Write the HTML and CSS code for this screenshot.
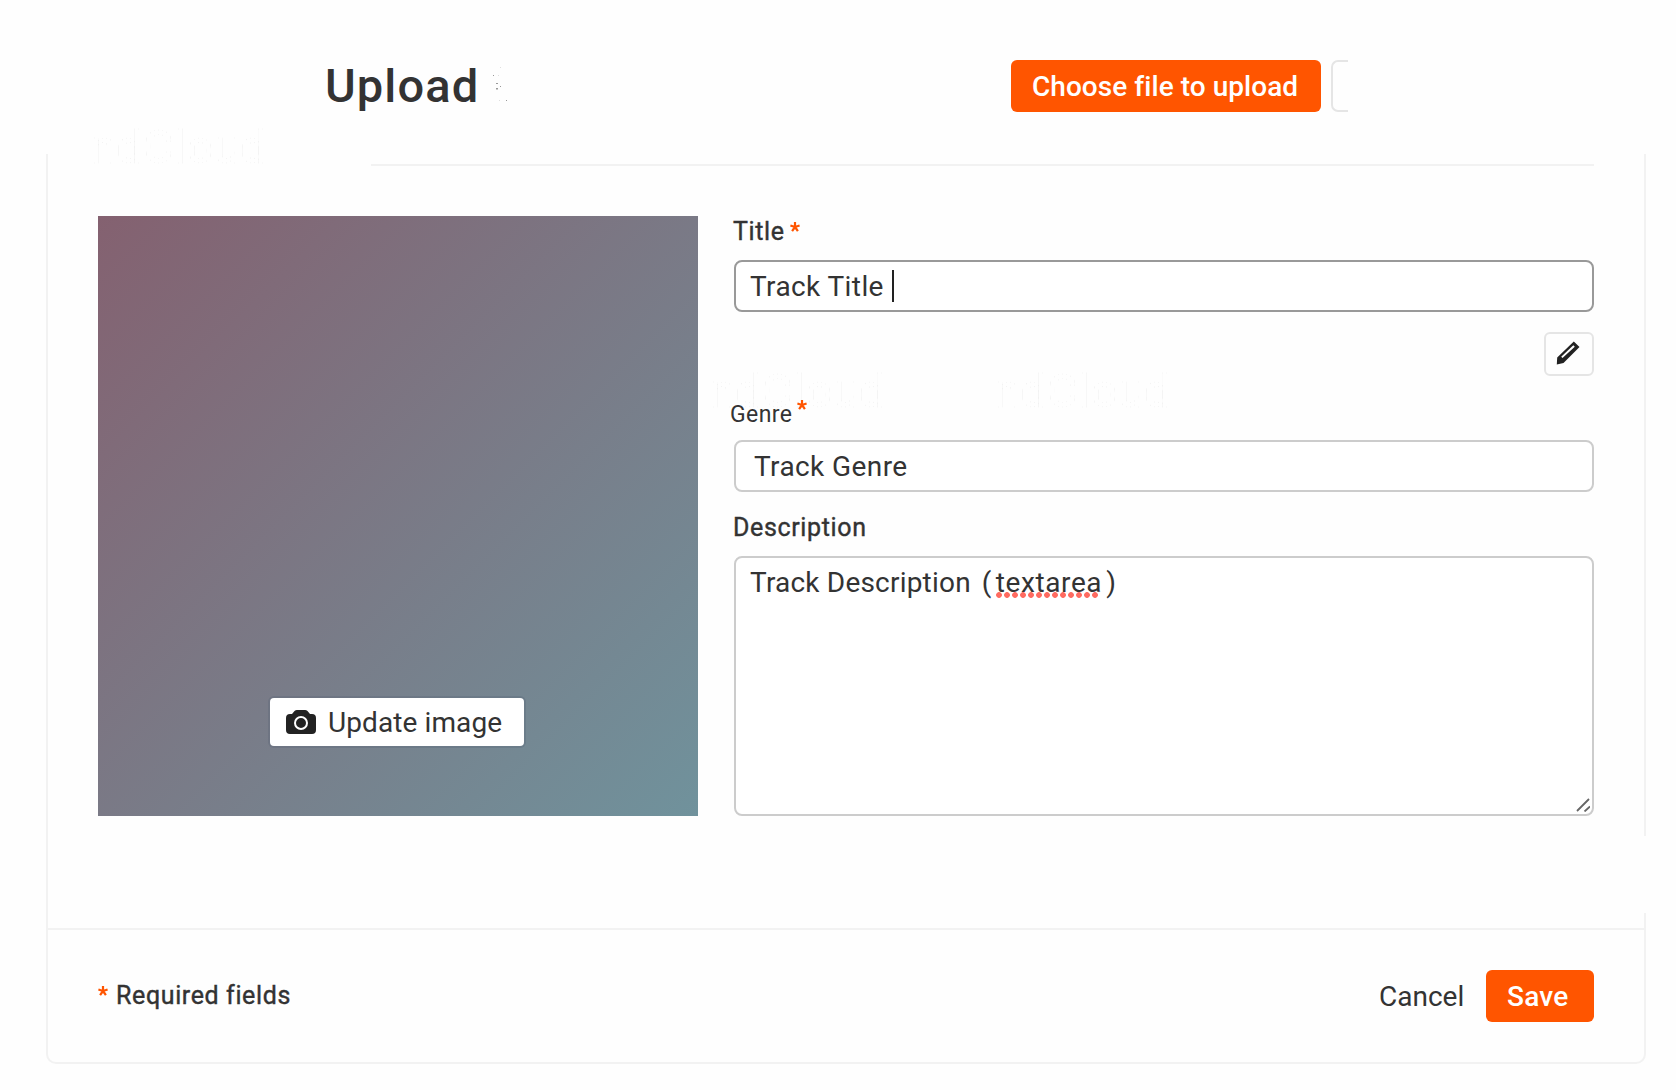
FILE: index.html
```html
<!DOCTYPE html>
<html lang="en">
<head>
<meta charset="utf-8">
<title>Upload</title>
<link rel="stylesheet" href="styles.css">
</head>
<body>
<header class="header">
  <h1 class="heading"><span class="t">Upload</span></h1>
  <svg class="specks" width="20" height="40" viewBox="0 0 20 40"><g fill="#999"><path d="M1 9h1v1H1zM4 17h2v1H4zM4 22h2v1.500H4zM8 20h1v1H8zM14 34h1v1h-1z"/><path d="M6 9h1v1H6zM8 1h1v1H8zM7 34h1v1H7z" opacity=".3"/></g></svg>
  <button class="btn choose"><span class="t">Choose file to upload</span></button>
  <div class="cut-button"></div>
</header>
<main class="card">
  <div class="rule"></div>
  <span class="ghost g1">ndCloud</span>
  <span class="ghost g2">ndCloud</span>
  <span class="ghost g3">ndCloud</span>
  <div class="edge-gap"></div>
  <section class="content">
    <div class="artwork">
      <button class="update">
        <svg width="30" height="24" viewBox="0 0 30 24"><path fill="#222" d="M4 4h2l2.500-3Q9.500 0 11 0h8q1.500 0 2.500 1L24 4h2q4 0 4 4v12q0 4-4 4H4q-4 0-4-4V8q0-4 4-4z"/><circle cx="15" cy="13" r="6" fill="#222" stroke="#fff" stroke-width="2"/></svg>
        <span class="t">Update image</span>
      </button>
    </div>
    <div class="form">
      <div class="label title-label"><span class="t">Title</span><svg class="star" viewBox="0 0 10 10"><path d="M5 5V0M5 5L.4 3.500M5 5l4.600-1.500M5 5L2.100 9.200M5 5l2.900 4.200"/></svg></div>
      <div class="field focused"><span class="t title-text">Track Title</span><i class="caret"></i></div>
      <button class="edit"><svg width="24" height="24" viewBox="0 0 24 24"><path fill="#222" fill-rule="evenodd" d="M17.800 .5L23.500 6L7.500 22L.8 23.500L1.200 16.500ZM17.300 4.200L5.200 15.800L6.500 17.100L18.800 5.700Z"/></svg></button>
      <div class="label genre-label"><span class="t">Genre</span><svg class="star" viewBox="0 0 10 10"><path d="M5 5V0M5 5L.4 3.500M5 5l4.600-1.500M5 5L2.100 9.200M5 5l2.900 4.200"/></svg></div>
      <div class="field genre"><span class="t genre-text">Track Genre</span></div>
      <div class="label desc-label"><span class="t">Description</span></div>
      <div class="field area"><span class="t desc-text">Track Description</span><span class="t paren">(</span><span class="t misspelt">textarea</span><span class="t close">)</span>
        <svg class="grip" width="14" height="14" viewBox="0 0 14 14"><path d="M1 13L13 1M8.500 13.500L14 8.500" stroke="#666" stroke-width="1.800" fill="none"/></svg>
      </div>
    </div>
  </section>
  <footer class="footer">
    <svg class="star" viewBox="0 0 10 10"><path d="M5 5V0M5 5L.4 3.500M5 5l4.600-1.500M5 5L2.100 9.200M5 5l2.900 4.200"/></svg>
    <span class="t required">Required fields</span>
    <button class="cancel"><span class="t">Cancel</span></button>
    <button class="btn save"><span class="t">Save</span></button>
  </footer>
</main>
</body>
</html>
```
FILE: styles.css
```css
* { box-sizing: border-box; }
body { margin: 0; height: 1090px; background: #fefefe; color: #333; font: 28px/32px Roboto, "Liberation Sans", sans-serif; overflow: hidden; }
button { border: 0; padding: 0; margin: 0; font: inherit; color: inherit; background: none; text-align: left; }
.t { display: inline-block; white-space: nowrap; flex: none; }
.header { display: flex; height: 154px; padding: 60px 0 0 325px; align-items: flex-start; }
.heading { margin: -2px 0 0; width: 167px; font-size: 47px; line-height: 56px; font-weight: 500; letter-spacing: 1.1px; }
.specks { margin-top: 6px; }
.btn { height: 52px; border-radius: 6px; background: #f50; color: #fff; font-weight: 500; padding: 1px 0 0 21px; }
.choose { width: 310px; margin-left: 499px; letter-spacing: .05px; }
.cut-button { width: 17px; height: 52px; margin-left: 10px; border: 2px solid #e5e5e5; border-right: 0; border-radius: 7px 0 0 7px; }
.card { position: relative; width: 1600px; height: 910px; margin-left: 46px; border: 2px solid #f2f2f2; border-top: 0; border-radius: 0 0 10px 10px; padding-top: 10px; display: flex; flex-direction: column; }
.rule { height: 2px; background: #f2f2f2; margin: 0 50px 0 323px; flex: none; }
.edge-gap { position: absolute; right: -2px; top: 682px; width: 2px; height: 77px; background: #fefefe; }
.ghost { position: absolute; font-size: 46px; line-height: 48px; font-weight: 500; letter-spacing: .9px; color: transparent; -webkit-text-stroke: .6px #f1f1f1; -webkit-mask: repeating-linear-gradient(90deg, #000 0 1px, transparent 1px 4px); mask: repeating-linear-gradient(90deg, #000 0 1px, transparent 1px 4px); }
.g1 { left: 42px; top: -31px; }
.g2 { left: 661px; top: 213px; }
.g3 { left: 946px; top: 213px; }
.content { display: flex; height: 762px; padding: 50px 50px 0; gap: 36px; flex: none; }
.artwork { width: 600px; height: 600px; background: linear-gradient(135deg, #846170, #70929c); display: flex; align-items: flex-end; padding: 0 0 70px 172px; }
.update { display: flex; align-items: center; width: 254px; height: 48px; padding-left: 16px; background: #fff; border-radius: 4px; box-shadow: 0 0 0 2px rgba(80, 90, 110, .25); }
.update .t { margin: 2px 0 0 12px; letter-spacing: .1px; }
.form { width: 860px; display: flex; flex-direction: column; position: relative; }
.label { display: flex; font-size: 25px; line-height: 32px; height: 44px; flex: none; }
.title-label .t, .desc-label .t, .required { -webkit-text-stroke: .4px #333; }
.title-label .t, .desc-label .t { margin-left: -1px; letter-spacing: .65px; }
.star { width: 10px; height: 10px; overflow: visible; flex: none; }
.star path { fill: none; stroke: #f50; stroke-width: 2.2; }
.title-label .star { margin: 6px 0 0 5px; }
.field { display: flex; height: 52px; border: 2px solid #ccc; border-radius: 8px; background: #fff; padding: 9px 0 0 14px; flex: none; letter-spacing: .4px; }
.focused { border-color: #999; }
.caret { width: 2px; height: 32px; background: #222; margin: -1px 0 0 8px; }
.edit { width: 50px; height: 44px; margin: 20px 0 0 810px; border: 2px solid #e5e5e5; border-radius: 6px; display: flex; padding: 7px 0 0 10px; flex: none; }
.genre-label { height: 64px; padding-top: 23px; margin-left: -4px; font-size: 23px; letter-spacing: .4px; }
.genre-label .star { margin: 1px 0 0 5px; }
.genre { padding-left: 18px; }
.desc-label { height: 64px; padding-top: 20px; }
.area { height: 260px; position: relative; }
.desc-text { letter-spacing: .2px; }
.paren { margin-left: 11px; }
.close { margin-left: 4px; }
.misspelt { position: relative; margin-left: 4px; letter-spacing: .6px; }
.misspelt::after { content: ""; position: absolute; left: 0; top: 25px; width: 104px; height: 6px; background: radial-gradient(circle at 3px 3px, #ff6b60 2.5px, transparent 3.2px) 0 0 / 8px 6px repeat-x; }
.grip { position: absolute; right: 2px; bottom: 2px; }
.footer { border-top: 2px solid #f2f2f2; display: flex; flex: 1; align-items: flex-start; padding: 40px 50px 0 50px; }
.footer > .star { margin-top: 16px; }
.required { margin: 10px 0 0 8px; font-size: 25px; letter-spacing: .62px; }
.cancel { margin: 11px 0 0 auto; width: 83px; }
.save { width: 108px; margin-left: 24px; letter-spacing: .2px; }
```
